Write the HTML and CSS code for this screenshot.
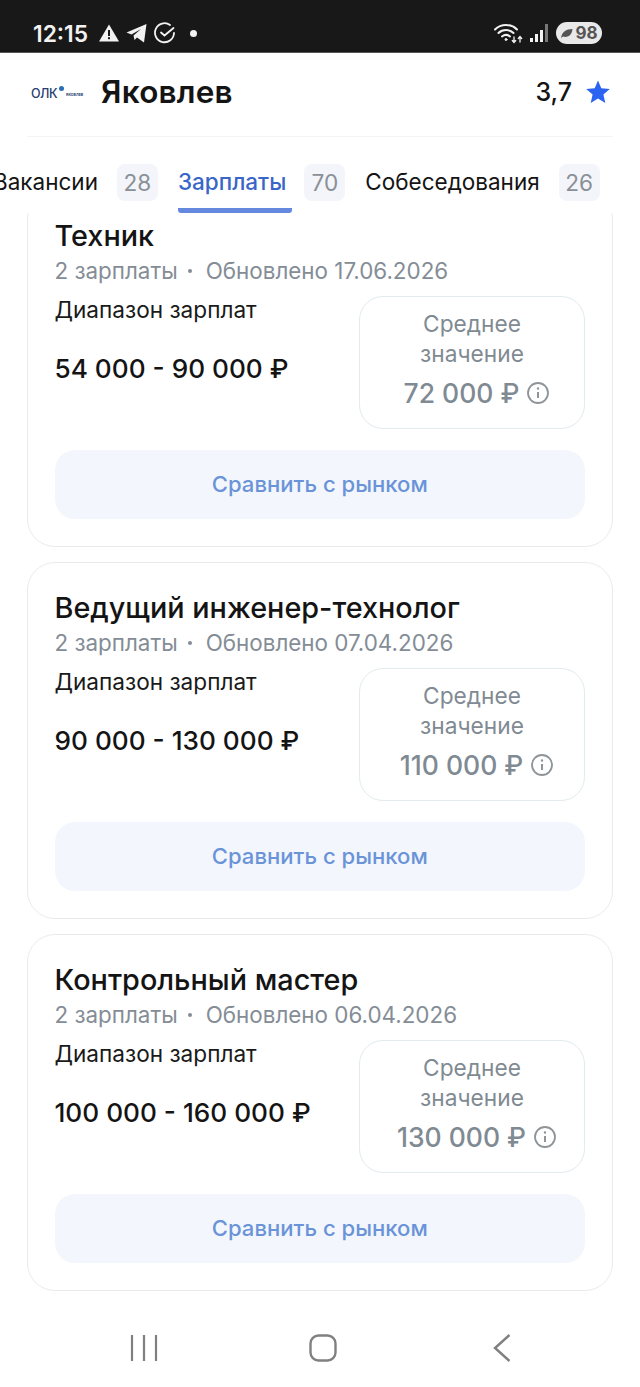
FILE: index.html
```html
<!DOCTYPE html>
<html lang="ru">
<head>
    <meta charset="UTF-8">
    <meta name="viewport" content="width=device-width, initial-scale=1.0">
    <title>Яковлев - Зарплаты</title>
    <link rel="stylesheet" href="styles.css">
</head>
<body>
    <!-- Статус-бар -->
    <div class="statusbar">
        <div class="status-left">
            <span class="clock">12:15</span>
            <svg class="st-icon" width="20" height="18" viewBox="0 0 20 18"><path d="M10 0.5 L20 17.5 H0 Z" fill="#f2f2f2"/><rect x="9" y="6" width="2" height="6" fill="#181818"/><rect x="9" y="13.2" width="2" height="2" fill="#181818"/></svg>
            <svg class="st-icon" width="21" height="20" viewBox="0 0 21 20"><path d="M0.5 9.5 L20.5 1 L18 19.5 L11 14.5 L8.5 17 L7.5 12.5 L15 6 L5.5 11.5 Z" fill="#f2f2f2"/></svg>
            <svg class="st-icon" width="22" height="22" viewBox="0 0 22 22" fill="none" stroke="#f2f2f2" stroke-width="1.8" stroke-linecap="round"><path d="M20 11 A9.5 9.5 0 1 1 16 3"/><path d="M7 10.5 L10.5 13.5 L19.5 6"/></svg>
            <span class="st-dot"></span>
        </div>
        <div class="status-right">
            <svg width="29" height="22" viewBox="0 0 29 22" fill="none" stroke="#f2f2f2" stroke-width="2" stroke-linecap="round"><path d="M1 7.5 C7 1.5 17 1.5 23 7.5"/><path d="M4.5 11 C8.5 7 15.5 7 19.5 11"/><path d="M8 14.5 C10.5 12.5 13.5 12.5 16 14.5"/><circle cx="12" cy="17.5" r="1" fill="#f2f2f2" stroke-width="1"/><path d="M20 15 V20 M18.300 18.500 L20 20.500 L21.700 18.500 M26 20 V15 M24.300 16.500 L26 14.500 L27.700 16.500" stroke-width="1.300"/></svg>
            <svg class="signal" width="20" height="20" viewBox="0 0 20 20"><rect x="1" y="15" width="3" height="4" fill="#f2f2f2"/><rect x="6" y="11" width="3" height="8" fill="#f2f2f2"/><rect x="11" y="7" width="3" height="12" fill="#f2f2f2"/><rect x="16" y="1" width="3" height="18" fill="#777"/></svg>
            <div class="battery">
                <svg width="13" height="11" viewBox="0 0 13 11"><path d="M1 10 C2 4 6 1 12.500 1 C12 7 8 10 3 8.500 Z" fill="#555"/></svg>
                <span>98</span>
            </div>
        </div>
    </div>

    <!-- Шапка компании -->
    <div class="company">
        <div class="company-main">
            <div class="logo">
                <span class="logo-oak">ОЛК</span>
                <span class="logo-globe"></span>
                <span class="logo-name">ЯКОВЛЕВ</span>
            </div>
            <h1>Яковлев</h1>
        </div>
        <div class="rating">
            <span>3,7</span>
            <svg width="24" height="24" viewBox="0 0 24 24"><path d="M12 0.500 L15.300 8.300 L23.800 9 L17.400 14.600 L19.300 22.900 L12 18.500 L4.700 22.900 L6.600 14.600 L0.200 9 L8.700 8.300 Z" fill="#2a64f0"/></svg>
        </div>
    </div>

    <!-- Вкладки -->
    <div class="tabs">
        <div class="tab tab-first"><span class="tab-label">Вакансии</span><span class="count">28</span></div>
        <div class="tab active"><span class="tab-label">Зарплаты</span><span class="count">70</span></div>
        <div class="tab"><span class="tab-label">Собеседования</span><span class="count">26</span></div>
    </div>

    <!-- Список зарплат -->
    <div class="list">
        <div class="list-inner">
            <div class="card">
                <div class="title">Техник</div>
                <div class="meta"><span>2 зарплаты</span><span class="sep"></span><span>Обновлено 17.06.2026</span></div>
                <div class="card-row">
                    <div class="range">
                        <div class="range-label">Диапазон зарплат</div>
                        <div class="range-value">54 000 - 90 000 ₽</div>
                    </div>
                    <div class="avg">
                        <div class="avg-label">Среднее значение</div>
                        <div class="avg-value">72 000 ₽
                            <svg class="info" width="24" height="24" viewBox="0 0 24 24" fill="none" stroke="#8e9498" stroke-width="1.800"><circle cx="12" cy="12" r="10"/><path d="M12 11 V17" stroke-width="2"/><circle cx="12" cy="7.500" r="0.600" stroke-width="1.200"/></svg>
                        </div>
                    </div>
                </div>
                <div class="compare">Сравнить с рынком</div>
            </div>

            <div class="card">
                <div class="title">Ведущий инженер-технолог</div>
                <div class="meta"><span>2 зарплаты</span><span class="sep"></span><span>Обновлено 07.04.2026</span></div>
                <div class="card-row">
                    <div class="range">
                        <div class="range-label">Диапазон зарплат</div>
                        <div class="range-value">90 000 - 130 000 ₽</div>
                    </div>
                    <div class="avg">
                        <div class="avg-label">Среднее значение</div>
                        <div class="avg-value">110 000 ₽
                            <svg class="info" width="24" height="24" viewBox="0 0 24 24" fill="none" stroke="#8e9498" stroke-width="1.800"><circle cx="12" cy="12" r="10"/><path d="M12 11 V17" stroke-width="2"/><circle cx="12" cy="7.500" r="0.600" stroke-width="1.200"/></svg>
                        </div>
                    </div>
                </div>
                <div class="compare">Сравнить с рынком</div>
            </div>

            <div class="card">
                <div class="title">Контрольный мастер</div>
                <div class="meta"><span>2 зарплаты</span><span class="sep"></span><span>Обновлено 06.04.2026</span></div>
                <div class="card-row">
                    <div class="range">
                        <div class="range-label">Диапазон зарплат</div>
                        <div class="range-value">100 000 - 160 000 ₽</div>
                    </div>
                    <div class="avg">
                        <div class="avg-label">Среднее значение</div>
                        <div class="avg-value">130 000 ₽
                            <svg class="info" width="24" height="24" viewBox="0 0 24 24" fill="none" stroke="#8e9498" stroke-width="1.800"><circle cx="12" cy="12" r="10"/><path d="M12 11 V17" stroke-width="2"/><circle cx="12" cy="7.500" r="0.600" stroke-width="1.200"/></svg>
                        </div>
                    </div>
                </div>
                <div class="compare">Сравнить с рынком</div>
            </div>
        </div>
    </div>

    <!-- Навигация Android -->
    <div class="navbar">
        <svg width="28" height="28" viewBox="0 0 28 28" fill="none" stroke="#808080" stroke-width="2.200"><path d="M2 1 V27 M14 1 V27 M26 1 V27"/></svg>
        <svg class="nav-home" width="28" height="28" viewBox="0 0 28 28" fill="none" stroke="#808080" stroke-width="2.400"><rect x="1.500" y="1.500" width="25" height="25" rx="8"/></svg>
        <svg width="18" height="28" viewBox="0 0 18 28" fill="none" stroke="#808080" stroke-width="2.400"><path d="M16.500 1 L2 14 L16.500 27"/></svg>
    </div>
</body>
</html>
```

FILE: styles.css
```css
* {
    box-sizing: border-box;
}

body {
    font-family: 'Inter', 'Noto Sans', sans-serif;
    background-color: #ffffff;
    margin: 0;
    padding: 0;
    height: 1387px;
    width: 640px;
    overflow: hidden;
    display: flex;
    flex-direction: column;
    color: #141414;
}

.statusbar {
    height: 53px;
    flex: none;
    background-color: #181818;
    border-bottom: 1px solid #555;
    padding: 21px 38px 0 33px;
    display: flex;
    justify-content: space-between;
    align-items: flex-start;
}

.status-left {
    display: flex;
    align-items: center;
    height: 24px;
    color: #f2f2f2;
}

.clock {
    font-size: 22.8px;
    font-weight: 600;
    margin-right: 11px;
}

.st-icon {
    margin-right: 7px;
}

.st-dot {
    width: 7px;
    height: 7px;
    border-radius: 50%;
    background-color: #f2f2f2;
    margin-left: 7px;
}

.status-right {
    display: flex;
    align-items: center;
    height: 24px;
}

.signal {
    margin-left: 6px;
}

.battery {
    margin-left: 7px;
    width: 46px;
    height: 22px;
    border-radius: 11px;
    background-color: #e9e9e9;
    display: flex;
    align-items: center;
    justify-content: center;
    gap: 2px;
    font-size: 17px;
    font-weight: 700;
    color: #555;
}

.company {
    height: 84px;
    flex: none;
    margin: 0 27px;
    padding: 0 3px 6px 4px;
    border-bottom: 1px solid #f3f4f6;
    display: flex;
    justify-content: space-between;
    align-items: center;
}

.company-main {
    display: flex;
    align-items: center;
}

.logo {
    width: 70px;
    margin-top: 3px;
    display: flex;
    align-items: center;
    color: #27406f;
}

.logo-oak {
    font-size: 12.5px;
    font-weight: 500;
    letter-spacing: -0.5px;
}

.logo-globe {
    width: 5px;
    height: 5px;
    border-radius: 50%;
    background-color: #2a6fb0;
    margin: -9px 2px 0 2px;
}

.logo-name {
    font-size: 3.6px;
    font-weight: 700;
    margin-top: 3px;
}

h1 {
    font-size: 31.5px;
    font-weight: 600;
    letter-spacing: 0.2px;
    margin: 0;
}

.rating {
    display: flex;
    align-items: center;
    gap: 14px;
    font-size: 25px;
    font-weight: 500;
}

.tabs {
    height: 76px;
    flex: none;
    padding: 27px 0 0 0;
    display: flex;
    gap: 20px;
    overflow: hidden;
    background-color: #ffffff;
}

.tab {
    display: flex;
    align-items: flex-start;
    gap: 19px;
    font-size: 22.5px;
    white-space: nowrap;
    flex: none;
}

.tab-first {
    margin-left: -7px;
}

.tab-label {
    line-height: 36px;
    height: 49px;
}

.active {
    gap: 12px;
}

.active .tab-label {
    color: #3a66c8;
    font-weight: 500;
    padding-right: 6px;
    border-bottom: 5px solid #6489de;
    border-radius: 0 0 3px 3px;
}

.count {
    width: 41px;
    height: 37px;
    border-radius: 8px;
    background-color: #f3f5fa;
    color: #8a9096;
    font-size: 22.6px;
    font-weight: 400;
    text-align: center;
    line-height: 37px;
}

.list {
    flex: 1;
    overflow: hidden;
    padding: 0 27px;
}

.list-inner {
    margin-top: -23px;
    display: flex;
    flex-direction: column;
    gap: 15px;
}

.card {
    height: 357px;
    background-color: #fff;
    border: 1px solid #e8ebee;
    border-radius: 28px;
    padding: 27px 27px 0 26.5px;
}

.title {
    font-size: 28.8px;
    font-weight: 500;
    line-height: 36px;
}

.meta {
    font-size: 22.4px;
    line-height: 34px;
    color: #848d96;
    display: flex;
    align-items: center;
}

.sep {
    width: 4px;
    height: 4px;
    border-radius: 50%;
    background-color: #848d96;
    margin: 0 14px 0 10px;
}

.card-row {
    margin-top: 8px;
    display: flex;
    justify-content: space-between;
}

.range-label {
    font-size: 22.6px;
    line-height: 28px;
    color: #1a1a1a;
}

.range-value {
    margin-top: 30px;
    font-size: 26.2px;
    font-weight: 500;
    line-height: 30px;
}

.avg {
    width: 226px;
    height: 133px;
    border: 1px solid #e2ebee;
    border-radius: 24px;
    padding: 12px 30px 0;
    text-align: center;
    color: #7f8a93;
}

.avg-label {
    font-size: 22.7px;
    line-height: 30px;
}

.avg-value {
    margin: 7px -20px 0 -10px;
    font-size: 26.5px;
    font-weight: 500;
    line-height: 34px;
    white-space: nowrap;
    display: flex;
    justify-content: center;
    align-items: center;
    gap: 7px;
}

.compare {
    margin-top: 21px;
    height: 69px;
    border-radius: 20px;
    background-color: #f3f7fd;
    color: #6a93d8;
    font-size: 22.1px;
    font-weight: 500;
    line-height: 69px;
    text-align: center;
}

.navbar {
    height: 78px;
    flex: none;
    padding: 0 129px 0 130px;
    display: flex;
    justify-content: space-between;
    align-items: center;
}

.nav-home {
    margin-right: 6px;
}
```
